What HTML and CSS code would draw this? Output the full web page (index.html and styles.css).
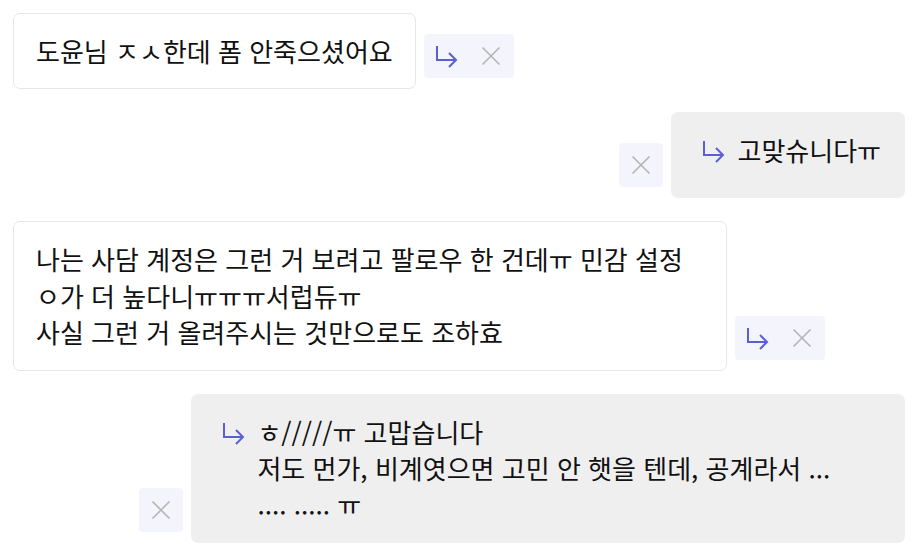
FILE: index.html
```html
<!DOCTYPE html>
<html lang="ko">
<head>
<meta charset="utf-8">
<title>Chat</title>
<link rel="stylesheet" href="styles.css">
</head>
<body>
<div class="chat">
  <div class="row row--in">
    <div class="bubble bubble--in">도윤님 ㅈㅅ한데 폼 안죽으셨어요</div>
    <div class="actions">
      <button class="act act--reply" aria-label="답장"><svg viewBox="0 0 24 24"><path d="M3 2V16H22M15 9L22 16L15 23"/></svg></button>
      <button class="act act--close" aria-label="닫기"><svg viewBox="0 0 24 24"><path d="M3.5 3.5L20.5 20.5M20.5 3.5L3.5 20.5"/></svg></button>
    </div>
  </div>

  <div class="row row--out">
    <div class="actions">
      <button class="act act--close" aria-label="닫기"><svg viewBox="0 0 24 24"><path d="M3.5 3.5L20.5 20.5M20.5 3.5L3.5 20.5"/></svg></button>
    </div>
    <div class="bubble bubble--out">
      <span class="quote-icon"><svg viewBox="0 0 24 24"><path d="M3 2V16H22M15 9L22 16L15 23"/></svg></span>
      <div class="bubble-text">고맞슈니다ㅠ</div>
    </div>
  </div>

  <div class="row row--in">
    <div class="bubble bubble--in bubble--wrap">나는 사담 계정은 그런 거 보려고 팔로우 한 건데ㅠ 민감 설정 ㅇ가 더 높다니ㅠㅠㅠ서럽듀ㅠ<br>사실 그런 거 올려주시는 것만으로도 조하효</div>
    <div class="actions">
      <button class="act act--reply" aria-label="답장"><svg viewBox="0 0 24 24"><path d="M3 2V16H22M15 9L22 16L15 23"/></svg></button>
      <button class="act act--close" aria-label="닫기"><svg viewBox="0 0 24 24"><path d="M3.5 3.5L20.5 20.5M20.5 3.5L3.5 20.5"/></svg></button>
    </div>
  </div>

  <div class="row row--out">
    <div class="actions">
      <button class="act act--close" aria-label="닫기"><svg viewBox="0 0 24 24"><path d="M3.5 3.5L20.5 20.5M20.5 3.5L3.5 20.5"/></svg></button>
    </div>
    <div class="bubble bubble--out bubble--wide">
      <span class="quote-icon"><svg viewBox="0 0 24 24"><path d="M3 2V16H22M15 9L22 16L15 23"/></svg></span>
      <div class="bubble-text">ㅎ/////ㅠ 고맙습니다<br>저도 먼가, 비계엿으면 고민 안 햇을 텐데, 공계라서 ...<br>.... ..... ㅠ</div>
    </div>
  </div>
</div>
</body>
</html>
```

FILE: styles.css
```css
* {
  box-sizing: border-box;
}

html, body {
  margin: 0;
  padding: 0;
  background: #ffffff;
}

body {
  font-family: "Noto Sans CJK KR", "Noto Sans", sans-serif;
  color: #111111;
  font-size: 26px;
  line-height: 1.4;
}

.chat {
  display: flex;
  flex-direction: column;
  gap: 23px;
  padding: 13px 10px 0 13px;
}

.row {
  display: flex;
  align-items: flex-end;
  gap: 8px;
}

.row--out {
  justify-content: flex-end;
}

.bubble {
  max-width: 80%;
  border-radius: 7px;
}

.bubble--in {
  background: #ffffff;
  border: 1px solid #e6e6e6;
  padding: 19px 22px;
}

.bubble--wrap {
  word-break: keep-all;
}

.bubble--out {
  background: #efefef;
  padding: 20px 24px;
  display: flex;
  align-items: flex-start;
}

.bubble--wide {
  width: 80%;
}

.quote-icon {
  flex: none;
  display: block;
  width: 24px;
  height: 26px;
  margin: 6px 12px 14px 6px;
}

.quote-icon svg {
  display: block;
  width: 24px;
  height: 26px;
  fill: none;
  stroke: #5b5fd6;
  stroke-width: 2;
}

.bubble-text {
  flex: 1 1 auto;
  min-width: 0;
}

.actions {
  flex: none;
  display: flex;
  background: #f4f4fc;
  border-radius: 4px;
  margin-bottom: 11px;
}

.act {
  display: flex;
  align-items: center;
  justify-content: center;
  width: 45px;
  height: 44px;
  padding: 0;
  margin: 0;
  border: 0;
  background: transparent;
  cursor: pointer;
}

.row--out .act {
  width: 44px;
}

.act svg {
  display: block;
  width: 24px;
  height: 24px;
  fill: none;
}

.act--reply svg {
  stroke: #5b5fd6;
  stroke-width: 2;
}

.act--close svg {
  stroke: #b4b4b4;
  stroke-width: 1.6;
}
```
